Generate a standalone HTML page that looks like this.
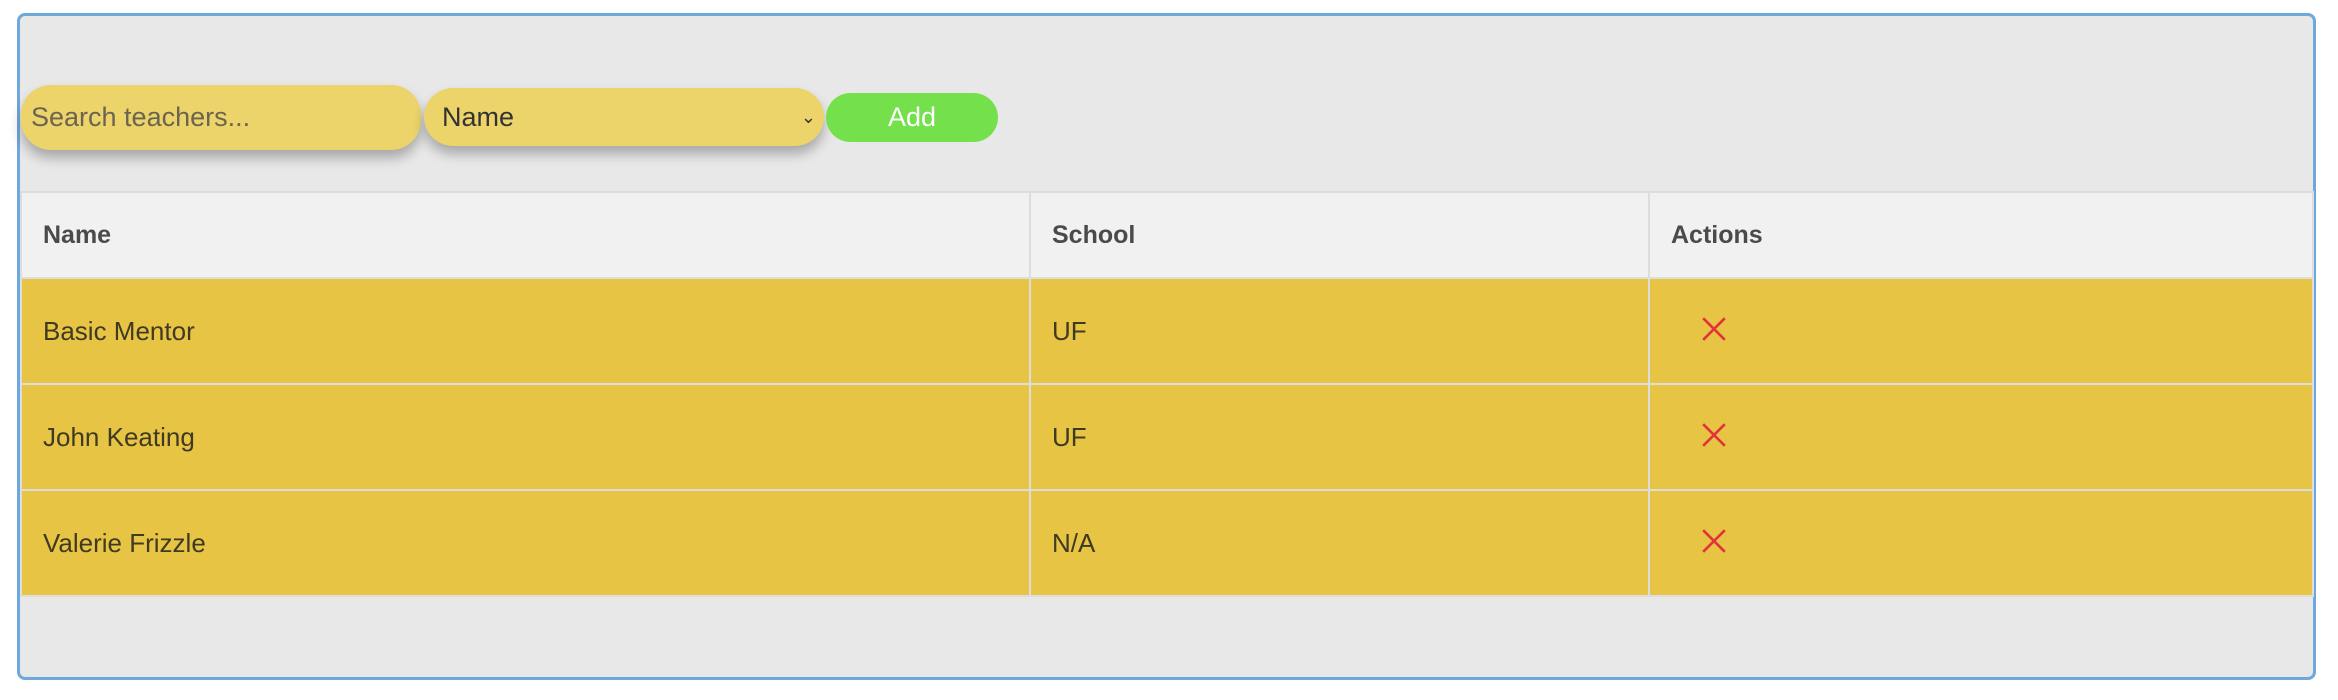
<!DOCTYPE html>
<html><head><style>
body{margin:0;width:2338px;height:700px;background:#fff;font-family:"Liberation Sans",sans-serif;position:relative;overflow:hidden}
.frame{position:absolute;left:17px;top:13px;width:2293px;height:661px;border:3px solid #6fa8dc;border-radius:8px;background:#e8e8e8}
.pill{position:absolute;background:#ecd36a;border-radius:30px;box-shadow:0 8px 12px rgba(0,0,0,.28);font-size:27px;display:flex;align-items:center}
.add{position:absolute;left:826px;top:93px;width:172px;height:49px;border-radius:25px;background:#74e04c;color:#fff;font-size:27px;display:flex;align-items:center;justify-content:center}
table{position:absolute;left:20px;top:191px;width:2294px;border-collapse:collapse}
td,th{border:2px solid #ddd;text-align:left;padding:0 0 0 21px;font-size:26px;color:#3f3a22}
th{background:#f1f1f1;height:84px;font-weight:bold;color:#4a4a4a;font-size:25px}
td{background:#e8c444;height:104px}
svg{margin-left:30px;vertical-align:middle;position:relative;top:-4px}
</style></head><body>
<div class="frame"></div>
<div class="pill" style="left:21px;top:85px;width:400px;height:65px;color:#6b6450"><span style="padding-left:10px">Search teachers...</span></div>
<div class="pill" style="left:424px;top:88px;width:400px;height:58px;color:#333"><span style="padding-left:18px">Name</span><span style="position:absolute;right:8px;font-size:18px">&#8964;</span></div>
<div class="add">Add</div>
<table>
<tr><th style="width:986px">Name</th><th style="width:596px">School</th><th>Actions</th></tr>
<tr><td>Basic Mentor</td><td>UF</td><td><svg width="26" height="26" viewBox="0 0 24 24"><path d="M2 2L22 22M22 2L2 22" stroke="#e0333a" stroke-width="2.4"/></svg></td></tr>
<tr><td>John Keating</td><td>UF</td><td><svg width="26" height="26" viewBox="0 0 24 24"><path d="M2 2L22 22M22 2L2 22" stroke="#e0333a" stroke-width="2.4"/></svg></td></tr>
<tr><td>Valerie Frizzle</td><td>N/A</td><td><svg width="26" height="26" viewBox="0 0 24 24"><path d="M2 2L22 22M22 2L2 22" stroke="#e0333a" stroke-width="2.4"/></svg></td></tr>
</table>
</body></html>
